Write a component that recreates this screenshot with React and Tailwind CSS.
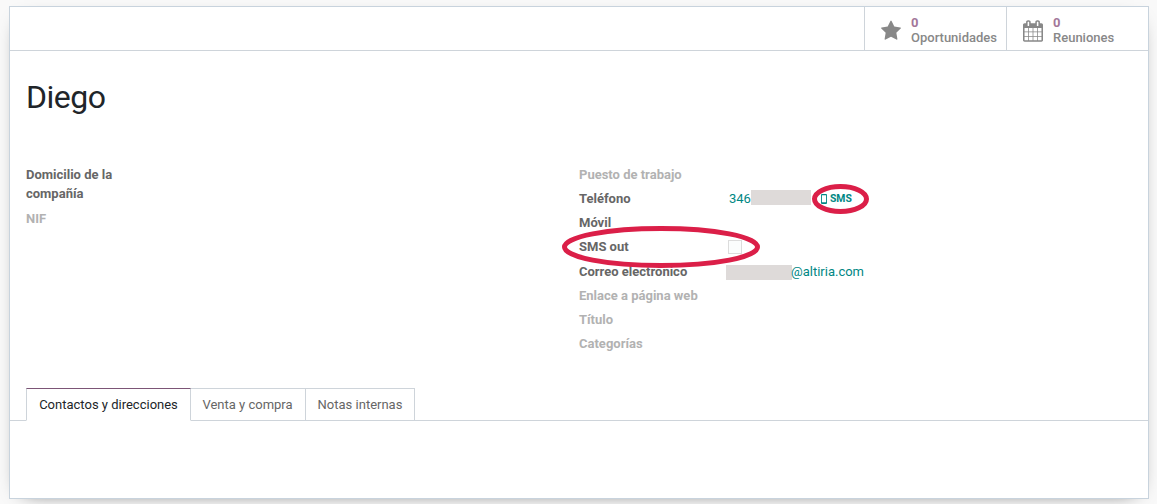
function Icon({ d, className, viewBox }) {
  return (
    <svg viewBox={viewBox} className={className} fill="currentColor" aria-hidden="true">
      <path d={d} />
    </svg>
  );
}

const STAR =
  "M1664 647q0 22-26 48l-363 354 86 500q1 7 1 20 0 21-10.5 35.5t-30.5 14.5q-19 0-40-12l-449-236-449 236q-22 12-40 12-21 0-31.5-14.5t-10.5-35.5q0-6 2-20l86-500-364-354q-25-27-25-48 0-37 56-46l502-73 225-455q19-41 49-41t49 41l225 455 502 73q56 9 56 46z";
const CALENDAR =
  "M128 1664h288v-288h-288v288zm352 0h320v-288h-320v288zm-352-352h288v-320h-288v320zm352 0h320v-320h-320v320zm-352-384h288v-288h-288v288zm736 736h320v-288h-320v288zm-384-736h320v-288h-320v288zm768 736h288v-288h-288v288zm-384-352h320v-320h-320v320zm-352-864v-288q0-13-9.5-22.5t-22.5-9.5h-64q-13 0-22.5 9.5t-9.5 22.5v288q0 13 9.5 22.5t22.5 9.5h64q13 0 22.5-9.5t9.5-22.5zm736 864h288v-320h-288v320zm-384-384h320v-288h-320v288zm384 0h288v-288h-288v288zm32-480v-288q0-13-9.5-22.5t-22.5-9.5h-64q-13 0-22.5 9.5t-9.5 22.5v288q0 13 9.5 22.5t22.5 9.5h64q13 0 22.5-9.5t9.5-22.5zm384-64v1280q0 52-38 90t-90 38h-1408q-52 0-90-38t-38-90v-1280q0-52 38-90t90-38h128v-96q0-66 47-113t113-47h64q66 0 113 47t47 113v96h384v-96q0-66 47-113t113-47h64q66 0 113 47t47 113v96h128q52 0 90 38t38 90z";

function StatButton({ icon, label, className }) {
  return (
    <button className={"flex items-center border-l border-[#ced4da] pl-4 text-left text-[#888888] " + className}>
      <Icon d={icon} viewBox="0 0 1664 1792" className="mt-1 h-[22px] w-5 shrink-0" />
      <span className="mt-[3px] ml-[10px] flex flex-col text-[13px] leading-[15px] font-medium">
        <span className="font-bold text-[#a3779a]">0</span>
        <span>{label}</span>
      </span>
    </button>
  );
}

function Row({ label, muted, className = "", children }) {
  return (
    <div className={"flex h-6 items-center " + className}>
      <div className={"w-[150px] shrink-0 font-bold " + (muted ? "text-[#b2b2b2]" : "text-[#666666]")}>{label}</div>
      <div className="flex items-center text-[#008784]">{children}</div>
    </div>
  );
}

function Redacted({ className }) {
  return <span className={"h-[15px] bg-[#dedad9] " + className} />;
}

export default function App() {
  return (
    <div className="relative h-[504px] w-[1157px] overflow-hidden bg-[#f9f9f9] px-[9px] pt-[6px] font-['Roboto',sans-serif] text-[13px] leading-[19.5px]">
      <main className="flex h-[493px] w-[1140px] flex-col border border-[#c8d3dd] bg-white shadow-[0_5px_20px_-15px_#000]">
        <header className="flex h-11 shrink-0 justify-end border-b border-[#ced4da]">
          <StatButton icon={STAR} label="Oportunidades" className="w-[142px]" />
          <StatButton icon={CALENDAR} label="Reuniones" className="w-[142px]" />
        </header>

        <h1 className="mt-[27px] ml-4 text-[32px] leading-[38px] tracking-[-0.5px] text-[#212529]">Diego</h1>

        <section className="mt-[47px] flex h-[222px] shrink-0 pl-4">
          <div className="w-[553px] pt-[2px] font-bold">
            <div className="w-[110px] leading-[19px] text-[#666666]">Domicilio de la compañía</div>
            <div className="mt-[6px] text-[#b2b2b2]">NIF</div>
          </div>
          <div>
            <Row label="Puesto de trabajo" muted />
            <Row label="Teléfono">
              <span>346</span>
              <Redacted className="mb-[3px] w-[60px]" />
              <svg viewBox="0 0 6 10" className="ml-[10px] h-[10px] w-[6px]" aria-hidden="true">
                <path d="M1 0h4a1 1 0 0 1 1 1v8a1 1 0 0 1-1 1H1a1 1 0 0 1-1-1V1a1 1 0 0 1 1-1zM.9 1.2v7h4.2v-7z" fill="currentColor" fillRule="evenodd" />
              </svg>
              <span className="ml-[3px] text-[10.4px] font-bold">SMS</span>
            </Row>
            <Row label="Móvil" />
            <Row label="SMS out">
              <span className="-ml-px h-[14px] w-[14px] border border-[#dcdcdc] bg-[#fbfdfd]" />
            </Row>
            <Row label="Correo electrónico" className="mt-px">
              <Redacted className="mt-px -ml-[3px] w-[66px]" />
              <span className="-ml-px">@altiria.com</span>
            </Row>
            <Row label="Enlace a página web" muted />
            <Row label="Título" muted />
            <Row label="Categorías" muted />
          </div>
        </section>

        <nav className="mt-[3px] flex h-[33px] shrink-0 text-[#666666]">
          <div className="w-4 border-b border-[#ced4da]" />
          <div className="flex w-[165px] items-center justify-center border border-t-[#7c5576] border-r-[#ced4da] border-b-transparent border-l-[#ced4da] text-[#212529]">
            Contactos y direcciones
          </div>
          <div className="flex w-[115px] items-center justify-center border-t border-r border-b border-[#ced4da] pr-px">Venta y compra</div>
          <div className="flex w-[109px] items-center justify-center border-t border-r border-b border-[#ced4da]">Notas internas</div>
          <div className="grow border-b border-[#ced4da]" />
        </nav>
      </main>

      {/* Hand-drawn style highlights over the SMS controls */}
      <svg viewBox="0 0 1157 504" className="pointer-events-none absolute inset-0 h-[504px] w-[1157px]" fill="none" stroke="#db1f48" strokeWidth="5" aria-hidden="true">
        <ellipse cx="840.5" cy="199" rx="26" ry="12.5" />
        <ellipse cx="661" cy="247" rx="96.5" ry="18.5" />
      </svg>
    </div>
  );
}
